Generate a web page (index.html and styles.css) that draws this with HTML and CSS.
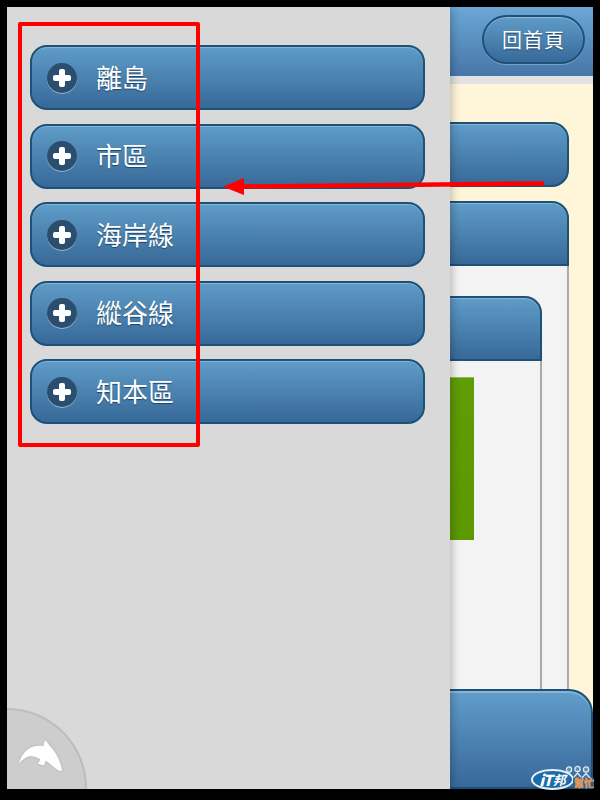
FILE: index.html
```html
<!DOCTYPE html>
<html lang="zh-Hant">
<head>
<meta charset="utf-8">
<title>選單</title>
<link rel="stylesheet" href="styles.css">
</head>
<body>
<div class="screen">
  <main class="main">
    <header class="topbar"><a class="home">回首頁</a></header>
    <div class="strip"></div>
    <div class="content">
      <div class="bar bar-solo"></div>
      <section class="group">
        <div class="bar bar-head"></div>
        <div class="group-body">
          <section class="inner">
            <div class="bar bar-head"></div>
            <div class="inner-body"><div class="green"></div></div>
          </section>
        </div>
      </section>
    </div>
    <footer class="footer"></footer>
  </main>

  <nav class="panel">
    <a class="item"><span class="plus"></span><span class="label">離島</span></a>
    <a class="item"><span class="plus"></span><span class="label">市區</span></a>
    <a class="item"><span class="plus"></span><span class="label">海岸線</span></a>
    <a class="item"><span class="plus"></span><span class="label">縱谷線</span></a>
    <a class="item"><span class="plus"></span><span class="label">知本區</span></a>
    <div class="corner">
      <svg class="dolphin" viewBox="0 0 180 135" aria-hidden="true"><path d="M27 86C32 62 48 42 68 35C80 31 92 32 101 33C100 27 102 21 106 16C112 22 116 30 122 36C140 54 152 80 156 108C146 108 136 100 127 92C120 86 113 80 106 77C106 84 104 90 100 91C94 90 88 88 83 84C87 82 90 78 90 72C80 66 68 62 58 64C46 67 36 75 27 86Z"/></svg>
    </div>
  </nav>

  <div class="redbox"></div>
  <svg class="arrow" viewBox="0 0 330 20" aria-hidden="true"><path d="M321 7.5L20 10.5" stroke="#f00" stroke-width="4.5" fill="none"/><path d="M0 10.7L21 2L21 19Z" fill="#f00"/></svg>

  <div class="logo">
    <svg class="people" viewBox="0 0 27 14" aria-hidden="true"><g fill="#5d8db3" stroke="#dfeaf2" stroke-width="1.3"><circle cx="5" cy="4.5" r="2.6"/><circle cx="13.5" cy="4" r="2.6"/><circle cx="22" cy="4.5" r="2.6"/><path d="M1 13L5 8.5L9 13M10 12L13.5 8L17 12M18 13L22 8.5L26 13" fill="none"/></g></svg>
    <span class="logo-it"><b class="logo-i">iT</b>邦</span><span class="logo-help">幫忙</span>
  </div>
</div>
</body>
</html>
```
FILE: styles.css
```css
* { box-sizing: border-box; }
html, body { margin: 0; height: 100%; background: #000; }
body { padding: 7px 7px 11px 7px; font-family: "Noto Sans CJK TC", "Noto Sans", sans-serif; }

.screen {
  position: relative;
  width: 586px;
  height: 782px;
  background: #fff6d9;
}

.main { display: flex; flex-direction: column; height: 100%; }

.topbar {
  flex: none;
  height: 69px;
  display: flex;
  align-items: flex-start;
  justify-content: flex-end;
  padding: 8px 8px 0 0;
  background: linear-gradient(#6ba7d6, #4776a8);
}

.home {
  width: 103px;
  height: 49px;
  border: 2px solid #1d5177;
  border-radius: 25px;
  display: flex;
  align-items: center;
  justify-content: center;
  color: #fff;
  font-size: 20px;
  letter-spacing: 1px;
  text-shadow: 0 1px 1px #1d4468;
  background: linear-gradient(#5f9cc8, #376998);
  box-shadow: inset 0 1px 0 rgba(255,255,255,.3), 0 1px 0 rgba(255,255,255,.25);
}

.strip { flex: none; height: 8px; background: #e2e2e2; }

.content {
  flex: 1;
  min-height: 0;
  overflow: hidden;
  padding: 38px 24px 0 0;
  display: flex;
  flex-direction: column;
  gap: 14px;
}

.bar {
  flex: none;
  height: 65px;
  border: 2px solid #1d5177;
  border-radius: 0 17px 17px 0;
  background: linear-gradient(#5f9cc8, #376998);
  box-shadow: inset 0 1px 0 rgba(255,255,255,.25);
}

.bar-head { border-radius: 0 17px 0 0; }

.group { flex: 1; min-height: 0; display: flex; flex-direction: column; }

.group-body {
  flex: 1;
  padding: 30px 25px 0 0;
  background: #f3f3f3;
  border-right: 2px solid #a9a9a9;
  display: flex;
}

.inner { flex: 1; display: flex; flex-direction: column; }

.inner-body {
  flex: 1;
  padding: 16px 0 0 420px;
  background: #f3f3f3;
  border-right: 2px solid #a9a9a9;
}

.green {
  width: 47px;
  height: 163px;
  background: linear-gradient(#5f9c05, #5c9800);
  box-shadow: inset 0 1px 0 rgba(255,255,255,.3);
}

.footer {
  flex: none;
  height: 100px;
  border: 2px solid #1d5177;
  border-left: 0;
  border-radius: 0 24px 0 0;
  background: linear-gradient(#619dca, #38689a);
  box-shadow: inset 0 2px 0 rgba(255,255,255,.25);
}

.panel {
  position: absolute;
  left: 0;
  top: 0;
  bottom: 0;
  width: 443px;
  padding: 38px 25px 0 23px;
  display: flex;
  flex-direction: column;
  gap: 13.5px;
  background: #d9d9d9;
  box-shadow: 2px 0 8px rgba(0,0,0,.25);
}

.item {
  height: 65px;
  flex: none;
  display: flex;
  align-items: center;
  gap: 19px;
  padding-left: 15px;
  border: 2px solid #1d5177;
  border-radius: 17px;
  background: linear-gradient(#5f9cc8, #376998);
  box-shadow: inset 0 1px 0 rgba(255,255,255,.25);
}

.plus {
  position: relative;
  flex: none;
  width: 30px;
  height: 30px;
  border-radius: 50%;
  background: #2b4e6e;
  box-shadow: 0 1px 0 rgba(255,255,255,.45);
}
.plus::before, .plus::after {
  content: "";
  position: absolute;
  background: #fff;
  border-radius: 2px;
}
.plus::before { left: 6px; top: 12px; width: 18px; height: 6px; }
.plus::after { left: 12px; top: 6px; width: 6px; height: 18px; }

.label {
  color: #fff;
  font-size: 26px;
  line-height: 1;
  margin-top: -2px;
  text-shadow: 0 1px 1px #1d4468;
}

.corner {
  position: absolute;
  left: 0;
  bottom: 0;
  width: 80px;
  height: 81px;
  border: 1px solid #bcbcbc;
  border-width: 2px 2px 0 0;
  border-radius: 0 80px 0 0;
  background: #cdcdcd;
}
.dolphin {
  position: absolute;
  left: 3px;
  top: 25px;
  width: 60px;
  height: 45px;
  fill: #fff;
  filter: drop-shadow(0 0 1px #aaa);
}

.redbox {
  position: absolute;
  left: 11px;
  top: 15px;
  width: 182px;
  height: 425px;
  border: 4px solid #f00;
  border-radius: 2px;
}

.arrow {
  position: absolute;
  left: 216px;
  top: 169px;
  width: 330px;
  height: 20px;
}

.logo {
  position: absolute;
  left: 524px;
  bottom: -1px;
  width: 66px;
  display: flex;
  align-items: flex-end;
  white-space: nowrap;
  font-weight: 700;
  line-height: 1;
}
.people {
  position: absolute;
  left: 33px;
  bottom: 11px;
  width: 27px;
  height: 14px;
}
.logo-it {
  position: relative;
  flex: none;
  width: 43px;
  height: 21px;
  display: flex;
  align-items: center;
  justify-content: center;
  border: 2px solid #e9f1f7;
  border-radius: 50%;
  background: #1b6cab;
  color: #fff;
  font-style: italic;
  font-size: 13px;
}
.logo-i { font-size: 15px; letter-spacing: -1px; margin-right: 1px; }
.logo-help {
  position: relative;
  flex: none;
  margin: 0 0 2px -1px;
  padding: 0 0 0 1px;
  color: #e8872a;
  font-size: 10px;
  background: #2c5c86;
  text-shadow: 0 0 1px #fff;
}
```
